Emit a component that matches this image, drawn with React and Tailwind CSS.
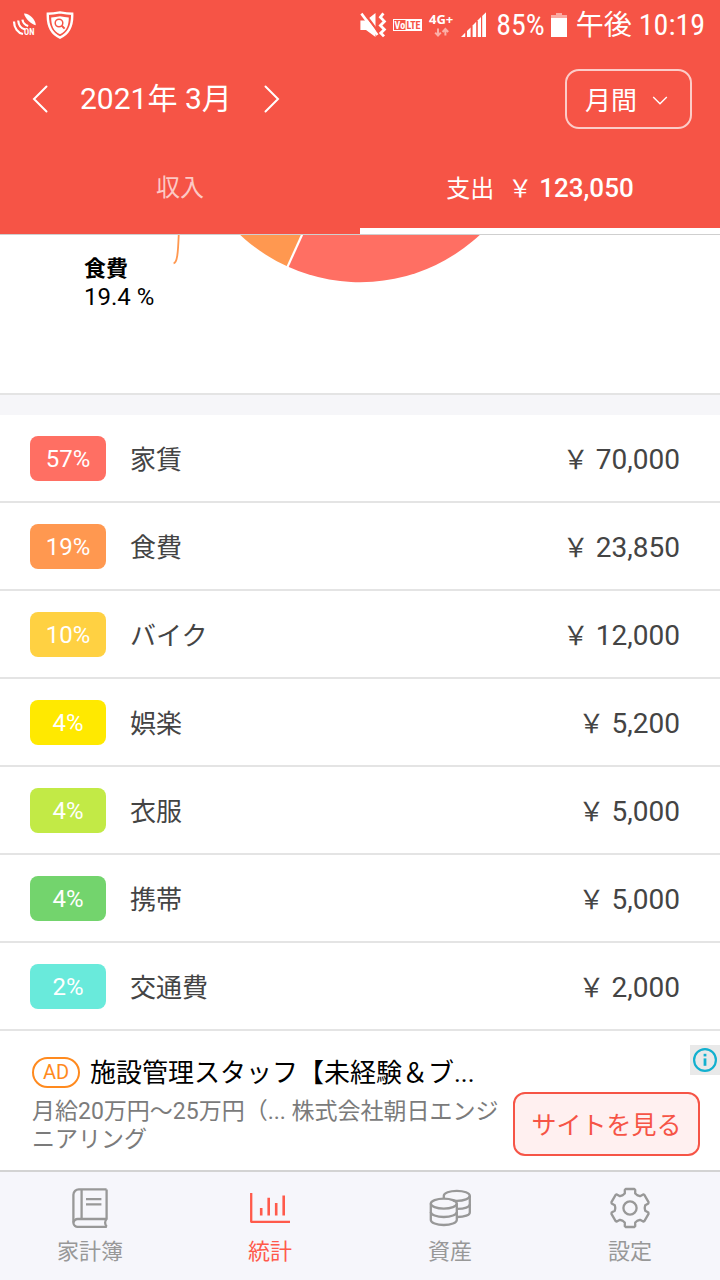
import React from 'react';

const categories = [
  { percent: '57%', name: '家賃', amount: '70,000', badge: 'bg-[#ff6f63]' },
  { percent: '19%', name: '食費', amount: '23,850', badge: 'bg-[#ff9850]' },
  { percent: '10%', name: 'バイク', amount: '12,000', badge: 'bg-[#ffd142]' },
  { percent: '4%', name: '娯楽', amount: '5,200', badge: 'bg-[#ffe900]' },
  { percent: '4%', name: '衣服', amount: '5,000', badge: 'bg-[#c2ea46]' },
  { percent: '4%', name: '携帯', amount: '5,000', badge: 'bg-[#73d46d]' },
  { percent: '2%', name: '交通費', amount: '2,000', badge: 'bg-[#69eadb]' },
];

function GpsIcon() {
  return (
    <svg className="h-7 w-7 overflow-visible" viewBox="0 0 28 28" fill="none" stroke="white" strokeWidth="2.2" aria-hidden="true">
      <path d="M12 2.6C17 2.2 23.6 8.6 23.8 14.2C19.4 13.6 13 7.6 12 2.6Z" fill="white" stroke="none" />
      <path d="M2 10.5C2 17 6 22 11 23" />
      <path d="M6.2 9.5C6.6 14.2 9.4 17.6 13 18.4" />
      <path d="M10.4 8.6C11 11.8 13.2 14.2 16.2 15" />
      <text x="12" y="24.4" fill="white" stroke="none" fontSize="8.5" fontWeight="700" fontFamily="'Roboto Condensed', Roboto, sans-serif">ON</text>
    </svg>
  );
}

function ShieldIcon() {
  return (
    <svg className="h-7 w-7" viewBox="0 0 28 28" fill="none" stroke="white" aria-hidden="true">
      <path d="M14 1.4C18 2.2 22 2.8 26.2 2.8C26.6 14 23.6 22.4 14 26.6C4.4 22.4 1.4 14 1.8 2.8C6 2.8 10 2.2 14 1.4Z" strokeWidth="2.4" />
      <path d="M14 5.2C17 5.9 19.8 6.3 22.8 6.4C22.8 14.4 20.6 20 14 23.2C7.4 20 5.2 14.4 5.2 6.4C8.2 6.3 11 5.9 14 5.2Z" fill="white" stroke="none" />
      <circle cx="13" cy="12" r="3.8" stroke="#f65446" strokeWidth="1.5" />
      <path d="M15.8 14.8L18.6 17.6" stroke="#f65446" strokeWidth="2" />
    </svg>
  );
}

function MuteIcon() {
  return (
    <svg className="h-7 w-7" viewBox="0 0 28 28" fill="none" aria-hidden="true">
      <path d="M1.4 9.5H7L16.5 2V26L7 19H1.4Z" fill="white" />
      <path d="M4.4 1L20.4 22.4" stroke="#f65446" strokeWidth="2.4" />
      <path d="M2.4 2.6L18.4 24" stroke="white" strokeWidth="2.6" />
      <path d="M24.4 2.4L21.4 6.2L25.4 10.4L21.4 14.4L25.4 18.4L21.8 22L25 25.4" stroke="white" strokeWidth="2.8" />
    </svg>
  );
}

function VolteIcon() {
  return (
    <svg className="h-3 w-[30px] overflow-visible" viewBox="0 0 30 12" aria-hidden="true">
      <rect x="0.5" y="0.5" width="28" height="11" fill="none" stroke="white" />
      <rect x="12.5" y="0.5" width="16" height="11" fill="white" />
      <text x="1.6" y="9.6" fontSize="10" fontWeight="700" fill="white" fontFamily="'Roboto Condensed', Roboto, sans-serif">Vo</text>
      <text x="13.4" y="9.6" fontSize="10" fontWeight="700" fill="#f65446" fontFamily="'Roboto Condensed', Roboto, sans-serif">LTE</text>
    </svg>
  );
}

function NetworkIcon() {
  return (
    <svg className="h-7 w-[26px] overflow-visible" viewBox="0 0 26 28" aria-hidden="true">
      <text x="0" y="13" fontSize="13" fontWeight="700" fill="white" fontFamily="'Open Sans', sans-serif">4G+</text>
      <g stroke="#fbb0a8" strokeWidth="2" fill="none">
        <path d="M9 17.4V24.6M6.2 21.6L9 24.6L11.8 21.6" />
        <path d="M16.4 24.6V18.2M13.6 21L16.4 18L19.2 21" />
      </g>
    </svg>
  );
}

function SignalIcon() {
  return (
    <svg className="h-[26px] w-[25px]" viewBox="0 0 25 26" fill="white" aria-hidden="true">
      <path d="M0 25L4.2 20.8V25Z" />
      <path d="M6 19L9.6 15.4V25H6Z" />
      <path d="M11.6 13.4L15.2 9.8V25H11.6Z" />
      <path d="M16.8 8.2L20 5V25H16.8Z" />
      <path d="M21.2 4L25 0.2V25H21.2Z" />
    </svg>
  );
}

function BatteryIcon() {
  return (
    <svg className="h-6 w-4" viewBox="0 0 16 24" aria-hidden="true">
      <path d="M5 0H11V2H16V5H0V2H5Z" fill="#fbaaa2" />
      <rect y="5" width="16" height="19" fill="white" />
    </svg>
  );
}

function StatusBar() {
  return (
    <div className="flex h-[50px] items-center justify-between pr-[15px] pl-3 font-['Roboto_Condensed','Liberation_Sans_Narrow','Noto_Sans_CJK_JP',sans-serif] text-[30px] leading-none">
      <div className="flex items-center gap-[6px]">
        <GpsIcon />
        <ShieldIcon />
      </div>
      <div className="flex items-center gap-[6px]">
        <MuteIcon />
        <VolteIcon />
        <NetworkIcon />
        <SignalIcon />
        <span className="pl-1">85%</span>
        <BatteryIcon />
        <span className="pl-[3px] whitespace-nowrap"><span className="text-[28px]">午後</span> 10:19</span>
      </div>
    </div>
  );
}

function Chevron({ d, label }) {
  return (
    <button type="button" aria-label={label} className="flex h-12 w-10 items-center justify-center">
      <svg className="h-7 w-4" viewBox="0 0 16 28" fill="none" stroke="white" strokeWidth="2" aria-hidden="true">
        <path d={d} strokeLinecap="round" />
      </svg>
    </button>
  );
}

function Header() {
  return (
    <header className="bg-[#f65446] text-white">
      <StatusBar />
      <div className="flex h-[98px] items-center justify-between pr-7 pl-5">
        <div className="flex items-center gap-5">
          <Chevron label="前の月" d="M14.5 1.5L2 14L14.5 26.5" />
          <h1 className="text-[30px] leading-9 whitespace-nowrap">2021年 3月</h1>
          <Chevron label="次の月" d="M1.5 1.5L14 14L1.5 26.5" />
        </div>
        <div className="relative">
          <label htmlFor="period" className="sr-only">期間</label>
          <select
            id="period"
            className="h-15 w-[127px] appearance-none rounded-[14px] border-2 border-white/70 bg-transparent pt-1 pl-[18px] text-[26px] leading-10"
          >
            <option>月間</option>
          </select>
          <svg className="pointer-events-none absolute top-[27px] right-6 h-[9px] w-4" viewBox="0 0 16 9" fill="none" stroke="white" strokeWidth="1.4" aria-hidden="true">
            <path d="M1.2 1L8 7.8L14.8 1" />
          </svg>
        </div>
      </div>
      <div role="tablist" className="grid h-[86px] grid-cols-2 text-2xl">
        <button type="button" role="tab" aria-selected="false" className="border-b-6 border-transparent text-white/70">
          収入
        </button>
        <button type="button" role="tab" aria-selected="true" className="border-b-6 border-white whitespace-pre">
          支出 <span className="pl-2">￥</span> <span className="pl-px text-[26px] font-medium">123,050</span>
        </button>
      </div>
    </header>
  );
}

function PieSection() {
  return (
    <section aria-label="支出グラフ" className="relative h-[161px] border-t border-b-2 border-t-[#cfcfcf] border-b-[#e4e4e4] bg-white">
      <svg className="absolute inset-0 h-[158px] w-full" viewBox="0 0 720 158" aria-hidden="true">
        <path d="M360 -128L287.6 31.6A175.3 175.3 0 0 1 184.7 -128Z" fill="#ff9850" />
        <path d="M360 -128L287.6 31.6A175.3 175.3 0 0 0 535.3 -128Z" fill="#ff6f63" />
        <path d="M360 -128L286.8 33.4" stroke="white" strokeWidth="2.2" />
        <path d="M178.8 -2C178.4 8 178.2 15 177.2 21C176.4 26 175.4 28 173.6 28.4" fill="none" stroke="#ff9850" strokeWidth="1.8" />
      </svg>
      <div className="pt-5 pl-[84px] text-black">
        <p className="text-[22px] leading-7 font-bold">食費</p>
        <p className="text-2xl leading-7">19.4 %</p>
      </div>
    </section>
  );
}

function CategoryList() {
  return (
    <ul className="bg-white">
      {categories.map((c) => (
        <li key={c.name} className="flex h-[88px] items-center border-b-2 border-[#e4e4e4] pr-10 pl-[30px] text-[28px] text-[#444]">
          <span className={`flex h-[45px] w-[76px] items-center justify-center rounded-lg pt-[2px] text-2xl text-white ${c.badge}`}>
            {c.percent}
          </span>
          <span className="flex-1 pt-1 pl-6 text-[26px]">{c.name}</span>
          <span className="pt-1 whitespace-nowrap"><span className="text-[26px]">￥</span> {c.amount}</span>
        </li>
      ))}
    </ul>
  );
}

function AdBanner() {
  return (
    <aside aria-label="広告" className="relative flex h-[139px] items-start justify-between bg-white pr-5 pl-8">
      <div className="min-w-0 flex-1 pt-[22px]">
        <div className="flex items-center gap-[10px]">
          <span className="flex h-[31px] w-12 items-center justify-center rounded-full border-2 border-[#ff8a1e] text-[20px] text-[#ff8a1e]">AD</span>
          <span className="pt-[2px] text-[26px] leading-9 whitespace-nowrap text-black">施設管理スタッフ【未経験＆ブ...</span>
        </div>
        <p className="pt-[7px] text-[23px] leading-7 text-[#7b7b7b]">月給20万円〜25万円（... 株式会社朝日エンジニアリング</p>
      </div>
      <a
        href="#site"
        className="mt-[61px] flex h-16 w-[187px] items-center justify-center rounded-xl border-2 border-[#f65446] bg-[#fff0f0] pt-1 text-[25px] whitespace-nowrap text-[#f65446]"
      >
        サイトを見る
      </a>
      <button type="button" aria-label="広告情報" className="absolute top-[14px] right-0 flex h-[30px] w-[30px] items-center justify-center bg-[#e9e9e9]">
        <svg className="h-[26px] w-[26px]" viewBox="0 0 26 26" fill="none" stroke="#12b0cf" strokeWidth="2.2" aria-hidden="true">
          <circle cx="13" cy="13" r="10.9" />
          <path d="M13 11.4V18.8" strokeWidth="2.8" />
          <path d="M13 6.8V9.4" strokeWidth="2.8" />
        </svg>
      </button>
    </aside>
  );
}

function BookIcon() {
  return (
    <>
      <path d="M38.6 3.4H11A5.4 5.4 0 0 0 5.4 8.8V36.6" />
      <path d="M38.6 3.4V33H10A4.2 4.2 0 0 0 5.4 37A4.2 4.2 0 0 0 10 40.8H38.8" />
      <path d="M38.6 33C36.6 35 36.6 38.6 38.8 40.8" />
      <path d="M13.6 3.4V33" />
      <path d="M18 13.2H33.4M18 18.4H33.4" />
    </>
  );
}

function StatsIcon() {
  return (
    <>
      <path d="M3.2 7V35.8H42" />
      <path d="M13.2 22V29.4M20.7 11.8V29.4M28.2 17V29.4M35.7 9.4V29.4" strokeWidth="2.6" />
    </>
  );
}

function CoinsIcon() {
  return (
    <>
      <ellipse cx="15.8" cy="17.6" rx="13" ry="5" />
      <path d="M2.8 17.6V34C2.8 36.8 8.6 39 15.8 39S28.8 36.8 28.8 34V17.6" />
      <path d="M2.8 26C2.8 28.8 8.6 31 15.8 31S28.8 28.8 28.8 26" />
      <path d="M15.8 12.4V9.8C15.8 7 21.6 4.8 28.8 4.8S41.8 7 41.8 9.8V26.4C41.8 29 36.6 31 29.4 31" />
      <path d="M41.8 9.8C41.8 12.6 36 14.8 28.8 14.8C27.4 14.8 26.2 14.7 25 14.5" />
      <path d="M41.8 18.2C41.8 21 36.6 22.9 29.4 22.9" />
    </>
  );
}

function GearIcon() {
  const tooth = [[-7, -13], [-5.2, -14.6], [-5.2, -18.2], [-4.2, -19], [4.2, -19], [5.2, -18.2], [5.2, -14.6], [7, -13]];
  const points = [0, 60, 120, 180, 240, 300].flatMap((deg) => {
    const a = (deg * Math.PI) / 180;
    return tooth.map(([x, y]) => [
      (22 + x * Math.cos(a) - y * Math.sin(a)).toFixed(2),
      (22 + x * Math.sin(a) + y * Math.cos(a)).toFixed(2),
    ].join(','));
  });
  return (
    <>
      <polygon points={points.join(' ')} />
      <circle cx="22" cy="22" r="6.6" />
    </>
  );
}

const navItems = [
  { label: '家計簿', Icon: BookIcon, color: 'text-[#989898]' },
  { label: '統計', Icon: StatsIcon, color: 'text-[#ff5a4b]', active: true },
  { label: '資産', Icon: CoinsIcon, color: 'text-[#989898]' },
  { label: '設定', Icon: GearIcon, color: 'text-[#989898]' },
];

function BottomNav() {
  return (
    <nav className="grid h-[110px] grid-cols-4 border-t-2 border-[#d3d3d3] bg-[#f6f6fb]">
      {navItems.map(({ label, Icon, color, active }) => (
        <button key={label} type="button" aria-current={active ? 'page' : undefined} className={`flex flex-col items-center gap-1 pt-[14px] ${color}`}>
          <svg className="h-11 w-11" viewBox="0 0 44 44" fill="none" stroke="currentColor" strokeWidth="2.3" strokeLinejoin="round" aria-hidden="true">
            <Icon />
          </svg>
          <span className="text-[22px] leading-9">{label}</span>
        </button>
      ))}
    </nav>
  );
}

export default function App() {
  return (
    <div lang="ja" className="flex min-h-screen flex-col bg-white font-['Roboto','Noto_Sans_CJK_JP',sans-serif]">
      <Header />
      <main className="flex-1">
        <PieSection />
        <div className="h-5 bg-[#f6f6f9]" />
        <CategoryList />
        <AdBanner />
      </main>
      <BottomNav />
    </div>
  );
}
